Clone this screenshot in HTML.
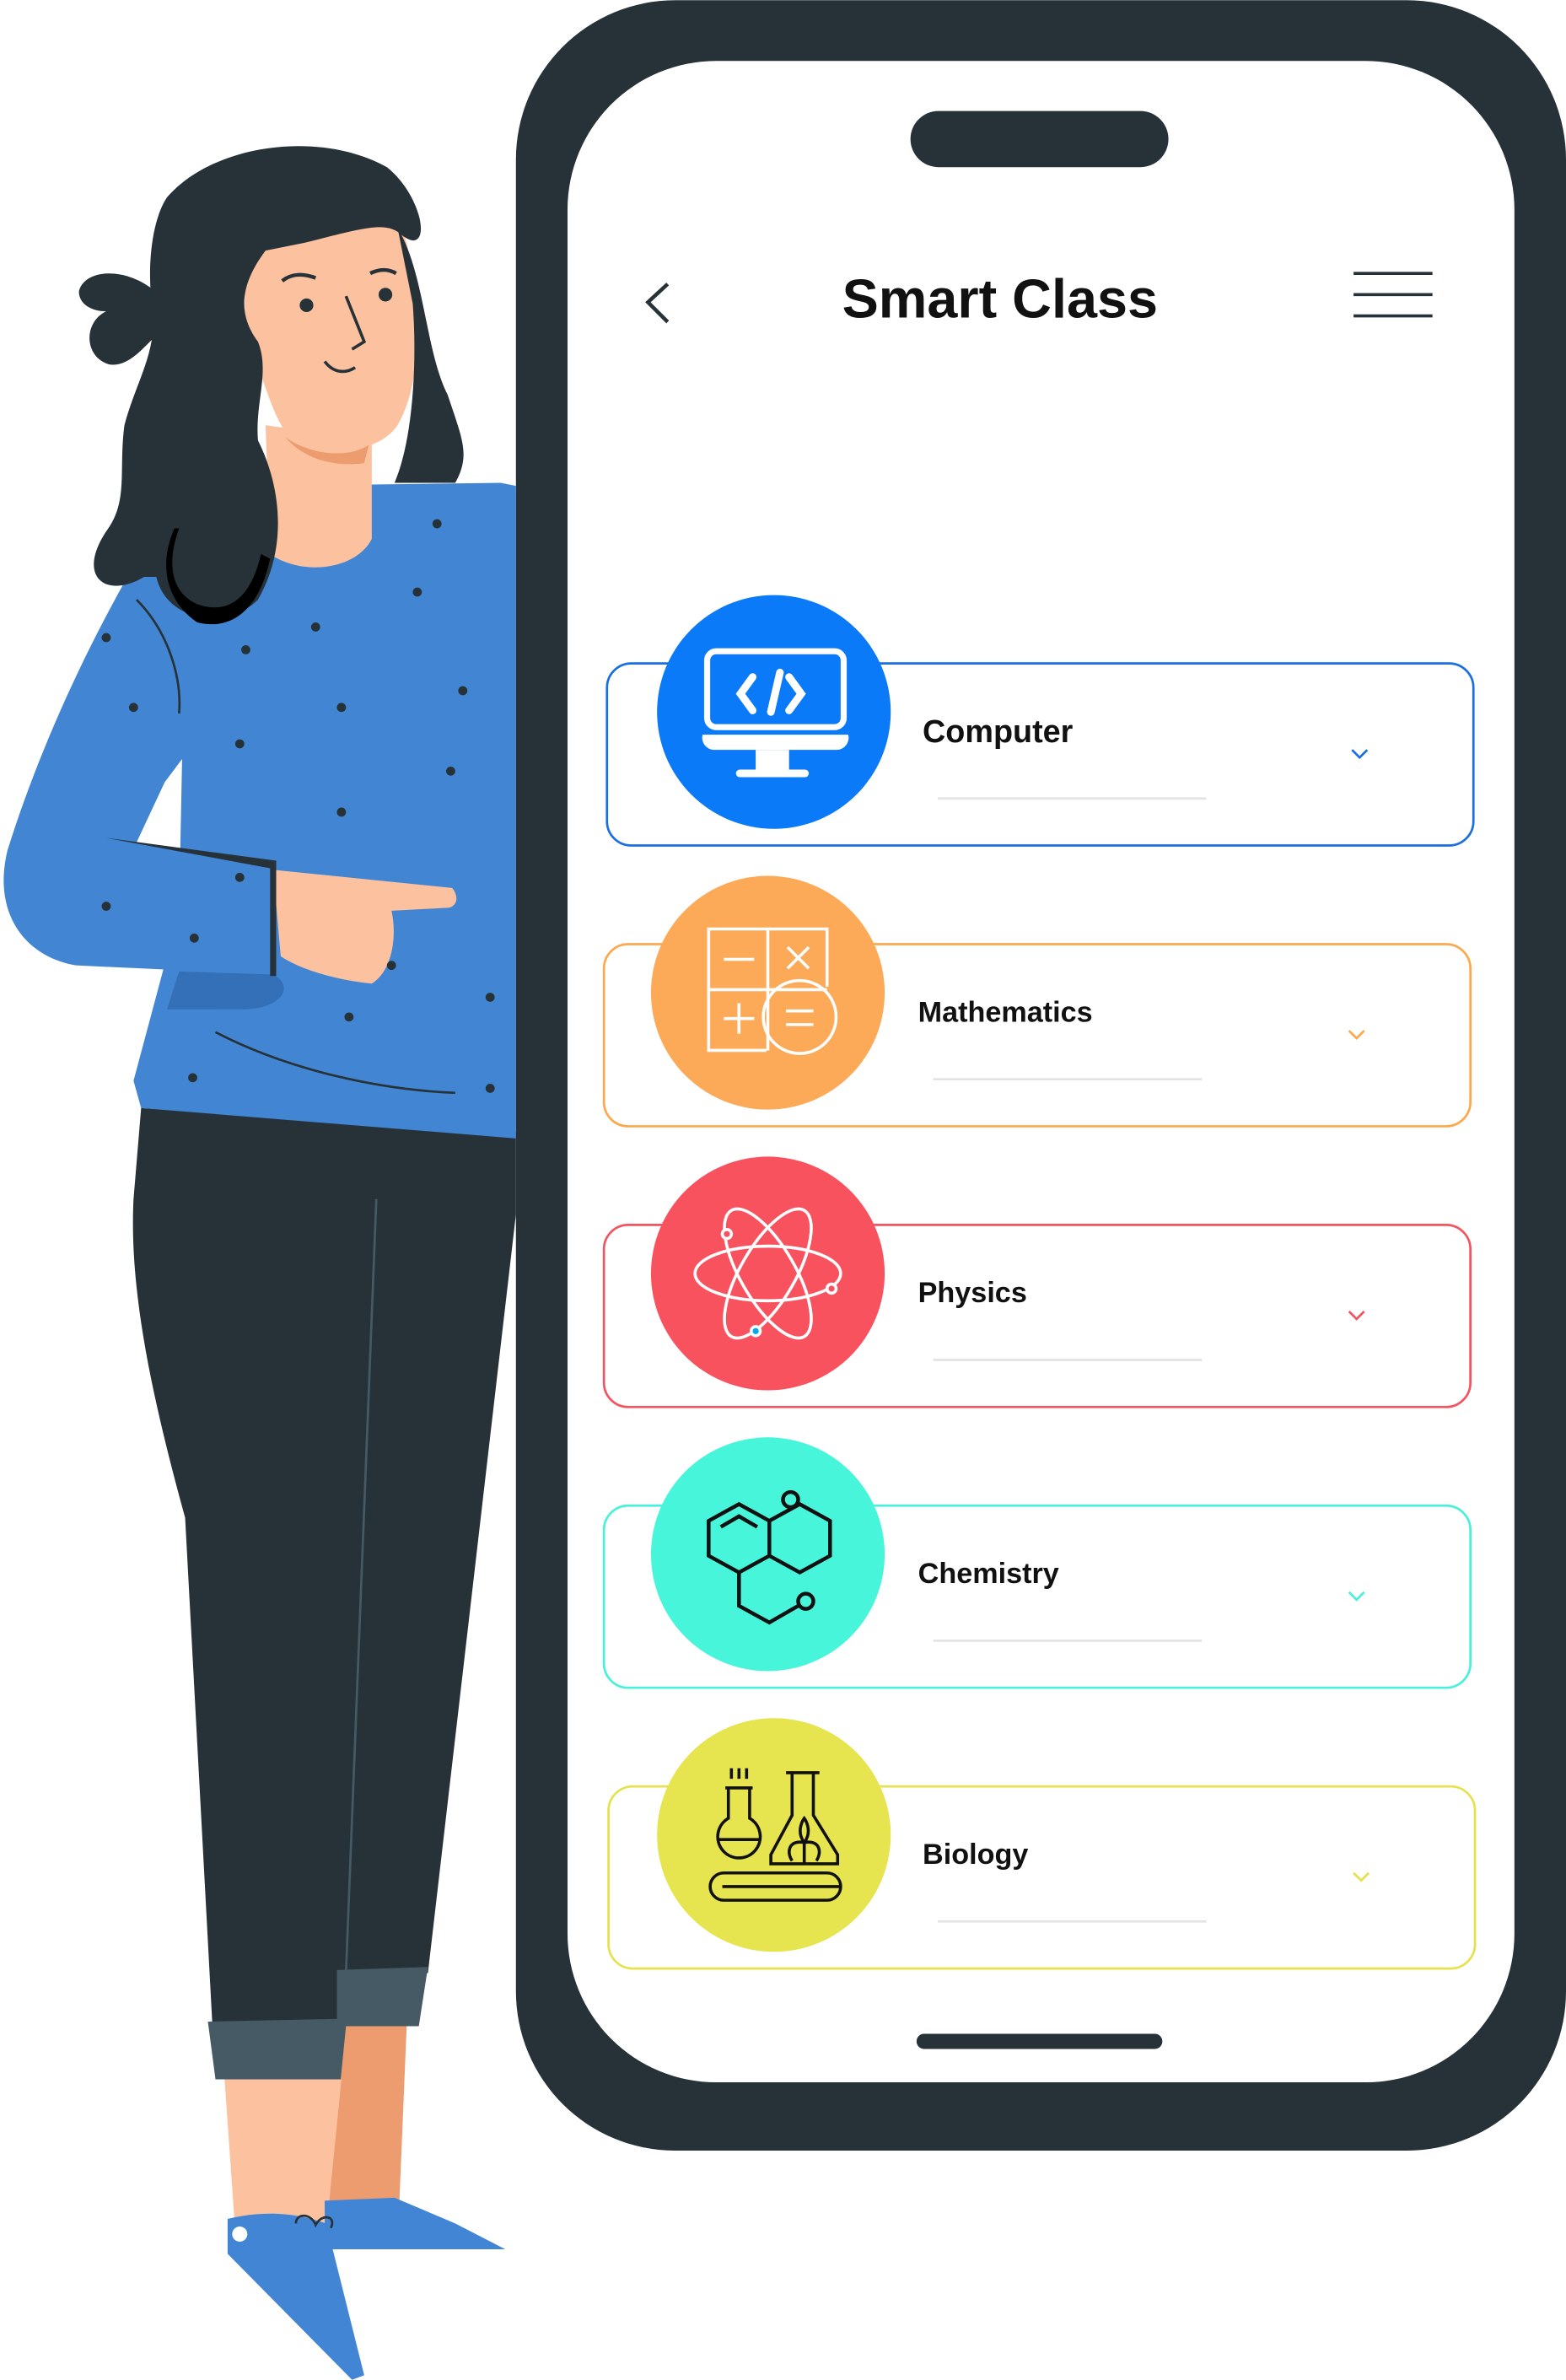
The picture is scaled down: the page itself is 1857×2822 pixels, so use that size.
<!DOCTYPE html>
<html><head><meta charset="utf-8"><style>
html,body{margin:0;padding:0;background:#fff;}
svg{display:block}
text{font-family:"Liberation Sans",sans-serif;font-weight:bold;fill:#111}
</style></head><body>
<svg width="1857" height="2822" viewBox="0 0 1032 1568" xmlns="http://www.w3.org/2000/svg">
<rect x="340" y="0" width="692" height="1417" rx="105" fill="#263238"/>
<rect x="374" y="40" width="624" height="1332" rx="98" fill="#fff"/>
<rect x="600" y="73" width="170" height="37" rx="18.5" fill="#263238"/>
<rect x="604" y="1340" width="162" height="10" rx="5" fill="#263238"/>
<text x="659" y="209" font-size="36" text-anchor="middle">Smart Class</text>
<path d="M440 187 L427 199 L440 212" fill="none" stroke="#263238" stroke-width="2.5"/>
<g stroke="#263238" stroke-width="2"><line x1="892" y1="180" x2="944" y2="180"/><line x1="892" y1="194" x2="944" y2="194"/><line x1="892" y1="208" x2="944" y2="208"/></g>

<g fill="none" stroke-width="1.5">
<rect x="400" y="437" width="571" height="120" rx="16" stroke="#1a6fe0"/>
<rect x="398" y="622" width="571" height="120" rx="16" stroke="#fba94c"/>
<rect x="398" y="807" width="571" height="120" rx="16" stroke="#f25560"/>
<rect x="398" y="992" width="571" height="120" rx="16" stroke="#49f1da"/>
<rect x="401" y="1177" width="571" height="120" rx="16" stroke="#e5e24e"/>
</g>
<g stroke="#e3e3e3" stroke-width="1.5">
<line x1="618" y1="526" x2="795" y2="526"/><line x1="615" y1="711" x2="792" y2="711"/>
<line x1="615" y1="896" x2="792" y2="896"/><line x1="615" y1="1081" x2="792" y2="1081"/>
<line x1="618" y1="1266" x2="795" y2="1266"/></g>
<g fill="none" stroke-width="1.5">
<path d="M891 494 L896 499 L901 494" stroke="#1a6fe0"/>
<path d="M889 679 L894 684 L899 679" stroke="#fba94c"/>
<path d="M889 864 L894 869 L899 864" stroke="#f25560"/>
<path d="M889 1049 L894 1054 L899 1049" stroke="#49f1da"/>
<path d="M892 1234 L897 1239 L902 1234" stroke="#e5e24e"/>
</g>
<text x="608" y="489" font-size="21">Computer</text>
<text x="605" y="673" font-size="19">Mathematics</text>
<text x="605" y="858" font-size="19">Physics</text>
<text x="605" y="1043" font-size="19">Chemistry</text>
<text x="608" y="1228" font-size="19">Biology</text>

<circle cx="510" cy="469" r="77" fill="#0a7af8"/>
<circle cx="506" cy="654" r="77" fill="#fcaa58"/>
<circle cx="506" cy="839" r="77" fill="#f9525f"/>
<circle cx="506" cy="1024" r="77" fill="#47f6da"/>
<circle cx="510" cy="1209" r="77" fill="#e6e44f"/>

<g fill="none" stroke="#fff" stroke-width="5" stroke-linecap="round">
<rect x="466" y="429" width="90" height="50" rx="6" stroke-width="4"/>
<path d="M496 446 L488 457 L496 468 M520 446 L528 457 L520 468 M514 443 L508 469"/>
</g>
<path d="M463 484 H559 A8 8 0 0 1 551 494 H471 A8 8 0 0 1 463 484Z" fill="#fff"/>
<rect x="498" y="494" width="22" height="16" fill="#fff"/>
<rect x="485" y="507" width="48" height="5" rx="2.5" fill="#fff"/>

<g fill="none" stroke="#fff" stroke-width="2">
<path d="M545 650 V612 H467 V692 H505"/><line x1="506" y1="612" x2="506" y2="692"/><line x1="467" y1="652" x2="545" y2="652"/>
<circle cx="527" cy="670" r="24"/>
<path d="M477 632 H497 M519 624 L533 638 M533 624 L519 638 M477 671 H497 M487 661 V681 M518 666 H536 M518 675 H536"/>
</g>
<g fill="none" stroke="#fff" stroke-width="2">
<ellipse cx="506" cy="839" rx="48" ry="18"/>
<ellipse cx="506" cy="839" rx="48" ry="18" transform="rotate(60 506 839)"/>
<ellipse cx="506" cy="839" rx="48" ry="18" transform="rotate(-60 506 839)"/>
<circle cx="479" cy="813" r="3" fill="#f9525f"/><circle cx="548" cy="849" r="3" fill="#f9525f"/><circle cx="498" cy="877" r="3" fill="#0ae"/>
</g>
<g fill="none" stroke="#111" stroke-width="2.5">
<path d="M487 991 L507 1002 V1025 L487 1036 L467 1025 V1002 Z"/>
<path d="M475 1006 L487 999 L499 1006"/>
<path d="M507 1002 L527 991 L547 1002 V1025 L527 1036 L507 1025"/>
<path d="M487 1036 V1058 L507 1069 L526 1058"/>
<circle cx="521" cy="988" r="5"/><circle cx="531" cy="1055" r="5"/>
</g>
<g fill="none" stroke="#111" stroke-width="2">
<rect x="468" y="1234" width="86" height="18" rx="9"/>
<line x1="476" y1="1243" x2="554" y2="1243"/>
<path d="M480 1178 V1198 A14 14 0 1 0 494 1198 V1178 Z M478 1178 H496"/>
<path d="M473 1212 H501"/>
<path d="M522 1168 V1196 L508 1222 V1228 H552 V1222 L536 1196 V1168 Z M518 1168 H540"/>
<path d="M530 1228 V1214 M530 1214 C520 1212 518 1220 522 1226 M530 1214 C540 1212 542 1220 538 1226 M530 1214 C524 1206 530 1198 530 1198 C530 1198 536 1206 530 1214"/>
<path d="M482 1165 V1172 M487 1165 V1172 M492 1165 V1172"/>
</g>

<path d="M93 730 L340 745 L340 800 L282 1300 L225 1300 L226 1340 L140 1335 L122 1000 C100 920 85 850 88 790 Z" fill="#263238"/>
<path d="M222 1298 L282 1296 L276 1335 L222 1335 Z" fill="#455a64"/>
<path d="M137 1332 L230 1330 L225 1370 L142 1370 Z" fill="#455a64"/>
<path d="M228 1335 L268 1335 L263 1455 L216 1455 Z" fill="#ec9c6e"/>
<path d="M148 1370 L225 1370 L215 1470 L155 1470 Z" fill="#fcc29f"/>
<path d="M214 1450 L260 1448 L300 1465 L333 1482 L214 1482 Z" fill="#4185d4"/>
<path d="M150 1462 C180 1455 200 1460 215 1465 L240 1565 L232 1568 L150 1485 Z" fill="#4185d4"/>
<circle cx="158" cy="1472" r="5" fill="#fff"/>
<path d="M195 1465 C195 1458 205 1458 208 1466 C212 1458 222 1460 218 1468" stroke="#263238" stroke-width="1.5" fill="none"/>
<path d="M105 345 L180 320 L330 318 L340 320 L340 750 L93 730 L88 712 L118 600 L120 500 L60 580 Z" fill="#4286d3"/>
<path d="M105 345 C70 400 30 480 5 560 C-5 600 15 630 50 636 L180 642 L182 570 L90 555 L125 480 Z" fill="#4286d3"/>
<path d="M118 640 L180 642 C195 650 185 665 160 665 L110 665 Z" fill="#3470b8"/>
<path d="M180 573 L298 585 C302 590 302 596 296 598 L258 600 C262 618 258 640 245 648 C225 646 200 640 185 630 Z" fill="#fcc29f"/>
<path d="M70 552 L182 567 L182 643 L178 643 L178 572 Z" fill="#263238"/>
<path d="M175 280 L245 290 L245 355 C235 375 200 380 178 365 Z" fill="#fcc29f"/>
<path d="M165 170 C175 140 230 130 265 150 C278 190 280 250 262 280 C250 298 220 300 195 292 C180 280 175 250 165 230 C160 210 160 190 165 170Z" fill="#fcc29f"/>
<path d="M188 288 C205 300 230 302 243 293 L240 305 C220 308 200 302 188 288Z" fill="#ec9c6e"/>
<path d="M110 130 C140 95 210 85 255 110 C280 130 285 170 265 155 C255 145 240 150 200 160 L175 165 C160 185 155 205 170 225 C178 245 168 265 170 290 C185 320 190 360 170 395 C150 415 110 410 103 380 L95 380 C70 395 50 380 70 350 C85 330 78 310 82 280 C90 250 105 230 100 200 C97 175 100 145 110 130Z" fill="#263238"/>
<path d="M262 150 C280 180 280 230 295 260 C305 290 310 300 300 318 L260 318 C272 290 275 240 272 200 Z" fill="#263238"/>
<path d="M100 190 C80 175 55 178 52 192 C52 200 60 205 70 205 C55 212 55 235 72 240 C85 242 95 228 102 222 Z" fill="#263238"/>
<path d="M115 348 C105 370 108 395 130 410 C150 415 170 405 178 368 L172 365 C165 395 150 405 130 398 C112 390 110 370 118 348 Z" fill="#000"/>
<circle cx="202" cy="201" r="4.5" fill="#263238"/><circle cx="254" cy="194" r="4.5" fill="#263238"/>
<path d="M186 185 C192 180 200 180 208 183 M244 180 C250 177 256 177 261 180" stroke="#263238" stroke-width="2.5" fill="none"/>
<path d="M228 195 L240 225 L232 230" stroke="#263238" stroke-width="2" fill="none"/>
<path d="M214 238 C220 246 228 246 234 242" stroke="#263238" stroke-width="2" fill="none"/>
<g fill="#263238">
<circle cx="288" cy="345" r="3"/><circle cx="275" cy="390" r="3"/><circle cx="208" cy="413" r="3"/><circle cx="162" cy="428" r="3"/>
<circle cx="305" cy="455" r="3"/><circle cx="225" cy="466" r="3"/><circle cx="158" cy="490" r="3"/><circle cx="297" cy="508" r="3"/>
<circle cx="225" cy="535" r="3"/><circle cx="70" cy="420" r="3"/><circle cx="88" cy="466" r="3"/><circle cx="158" cy="578" r="3"/>
<circle cx="70" cy="597" r="3"/><circle cx="128" cy="618" r="3"/><circle cx="258" cy="636" r="3"/><circle cx="323" cy="657" r="3"/>
<circle cx="230" cy="670" r="3"/><circle cx="127" cy="710" r="3"/><circle cx="323" cy="717" r="3"/>
</g>
<path d="M142 680 C190 705 250 718 300 720" stroke="#263238" stroke-width="1.5" fill="none"/>
<path d="M90 395 C110 415 120 445 118 470" stroke="#263238" stroke-width="1.5" fill="none"/>
<path d="M248 790 L228 1300" stroke="#455a64" stroke-width="1.5" fill="none"/>
</svg>
</body></html>
